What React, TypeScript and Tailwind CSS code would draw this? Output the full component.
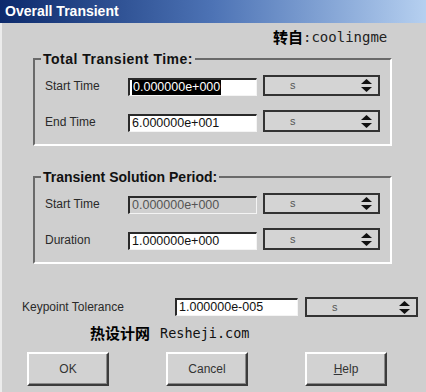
import { FC, ReactNode } from 'react'

const sans = { fontFamily: '"Liberation Sans", Arial, sans-serif' }

const Spinner = () => (
	<svg width="11" height="13" viewBox="0 0 11 13" className="shrink-0">
		<path d="M5.5 0 L11 5 L0 5 Z" fill="#111" />
		<path d="M0 8 L11 8 L5.5 13 Z" fill="#111" />
	</svg>
)

const UnitSelect: FC<{ w: string; h: string }> = ({ w, h }) => (
	<div
		className={`${w} ${h} flex items-center justify-between border-2 border-[#333] bg-[#d4d4d4] pl-[25px] pr-[6px]`}
	>
		<span className="text-[11px] text-[#555] leading-none">s</span>
		<Spinner />
	</div>
)

const NumInput: FC<{ w: string; value: string; selected?: boolean; disabled?: boolean }> = ({
	w,
	value,
	selected,
	disabled,
}) => (
	<div
		className={`${w} h-[18px] flex items-center border-t-2 border-l-2 border-[#2a2a2a] border-b border-r border-b-[#f4f4f4] border-r-[#f4f4f4] pl-[2px] text-[12.5px] leading-none ${
			disabled ? 'bg-[#d0d0d0] text-[#555]' : 'bg-white text-[#111]'
		}`}
	>
		{selected ? <span className="bg-black text-white px-[1px] py-[1px]">{value}</span> : <span>{value}</span>}
	</div>
)

const Row: FC<{ label: string; children: ReactNode; h: string }> = ({ label, children, h }) => (
	<div className={`flex items-end ${h} pl-[10px]`}>
		<span className="w-[83px] text-[12px] text-[#2a2a2a] mb-[1px]">{label}</span>
		{children}
	</div>
)

const Group: FC<{ title: string; children: ReactNode; className?: string; wide?: boolean }> = ({
	title,
	children,
	className,
	wide,
}) => (
	<fieldset
		className={`ml-[31px] w-[359px] border-2 border-t-[#6a6a6a] border-l-[#6a6a6a] border-b-white border-r-white pb-[12px] ${className ?? ''}`}
	>
		<legend
			className={`ml-[6px] px-[2px] text-[14px] font-bold leading-[16px] text-[#111] ${wide ? 'tracking-[0.5px]' : ''}`}
		>
			{title}
		</legend>
		<div className="flex flex-col gap-[14px] mt-[8px]">{children}</div>
	</fieldset>
)

const Btn: FC<{ children: ReactNode }> = ({ children }) => (
	<button
		type="button"
		className="w-[82px] h-[34px] border-2 border-t-white border-l-white border-b-[#3c3c3c] border-r-[#3c3c3c] bg-[#d2d2d2] text-[12px] text-[#333] shadow-[inset_-1px_-1px_0_#8a8a8a]"
	>
		{children}
	</button>
)

const App: FC = () => {
	return (
		<div className="w-[426px] h-[392px] overflow-hidden bg-[#cfcfcf]" style={sans}>
			<div className="h-[23px] flex items-center pl-[5px] bg-linear-to-r from-[#0d2a6c] via-[#4d73b5] to-[#b6d0f0]">
				<span className="text-[14px] font-bold text-white">Overall Transient</span>
			</div>

			<div className="border-l-2 border-[#ececec] h-[369px]">
				<div className="h-[28px] pl-[271px] pt-[1px] flex items-center">
					<span
						className="text-[15px] font-bold text-black"
						style={{ fontFamily: '"Noto Sans CJK SC", sans-serif' }}
					>
						转自
					</span>
					<span className="text-[14px] text-[#222]" style={{ fontFamily: '"DejaVu Sans Mono", monospace' }}>
						:coolingme
					</span>
				</div>

				<Group title="Total Transient Time:" wide>
					<Row label="Start Time" h="h-[21px]">
						<NumInput w="w-[129px]" value="0.000000e+000" selected />
						<div className="ml-[6px]">
							<UnitSelect w="w-[117px]" h="h-[21px]" />
						</div>
					</Row>
					<Row label="End Time" h="h-[22px]">
						<NumInput w="w-[129px]" value="6.000000e+001" />
						<div className="ml-[6px]">
							<UnitSelect w="w-[117px]" h="h-[22px]" />
						</div>
					</Row>
				</Group>

				<Group title="Transient Solution Period:" className="mt-[23px]">
					<Row label="Start Time" h="h-[21px]">
						<NumInput w="w-[129px]" value="0.000000e+000" disabled />
						<div className="ml-[6px]">
							<UnitSelect w="w-[117px]" h="h-[21px]" />
						</div>
					</Row>
					<Row label="Duration" h="h-[22px]">
						<NumInput w="w-[129px]" value="1.000000e+000" />
						<div className="ml-[6px]">
							<UnitSelect w="w-[117px]" h="h-[22px]" />
						</div>
					</Row>
				</Group>

				<div className="mt-[33px] h-[20px] flex items-center pl-[20px]">
					<span className="w-[153px] text-[12px] text-[#2a2a2a]">Keypoint Tolerance</span>
					<NumInput w="w-[123px]" value="1.000000e-005" />
					<div className="ml-[7px]">
						<UnitSelect w="w-[113px]" h="h-[20px]" />
					</div>
				</div>

				<div className="mt-[6px] h-[20px] flex items-center pl-[88px]">
					<span
						className="text-[15px] font-bold text-black"
						style={{ fontFamily: '"Noto Sans CJK SC", sans-serif' }}
					>
						热设计网
					</span>
					<span
						className="ml-[10px] text-[13.5px] text-[#111]"
						style={{ fontFamily: '"DejaVu Sans Mono", monospace' }}
					>
						Resheji.com
					</span>
				</div>

				<div className="mt-[9px] flex pl-[25px] gap-[57px]">
					<Btn>OK</Btn>
					<Btn>Cancel</Btn>
					<Btn>
						<span className="underline">H</span>elp
					</Btn>
				</div>
			</div>
		</div>
	)
}

export default App
